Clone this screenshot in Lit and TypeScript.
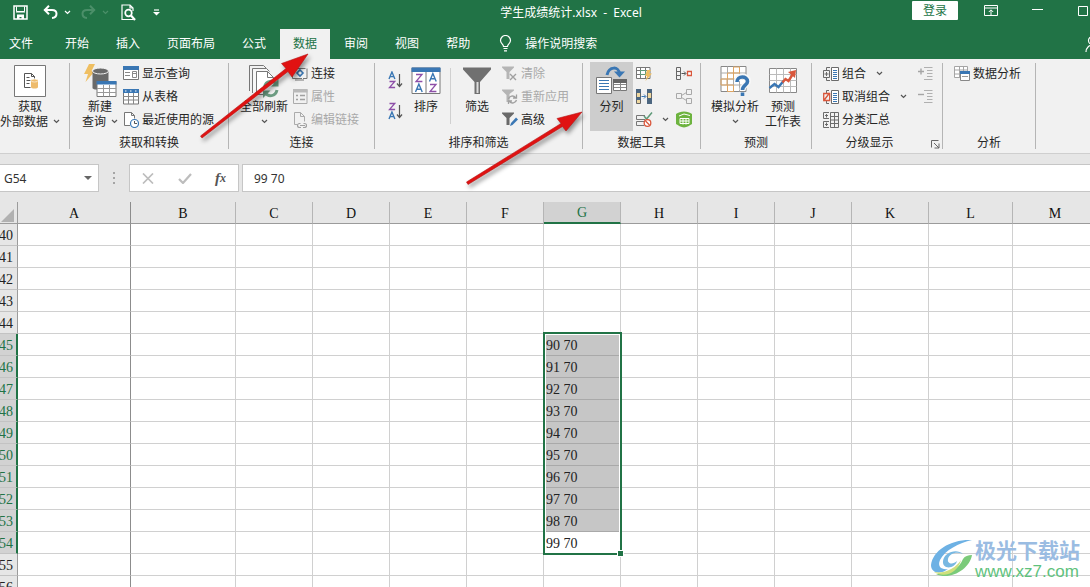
import { LitElement, html, svg, css, nothing } from "lit";
import { customElement, property } from "lit/decorators.js";
import { classMap } from "lit/directives/class-map.js";
import { styleMap } from "lit/directives/style-map.js";

type Icon = { w: number; h: number; body: unknown };

const draw = (icon: Icon) => html`<svg
  width=${icon.w}
  height=${icon.h}
  viewBox="0 0 ${icon.w} ${icon.h}"
  fill="none"
  aria-hidden="true"
>${icon.body}</svg>`;

const GREY = "#6b6b6b";
const BLUE = "#3a77b4";

const letterA = (x: number, y: number, s: number, c: string) =>
  svg`<path d="M${x} ${y + s}L${x + s * 0.42} ${y}L${x + s * 0.84} ${y + s}M${x + s * 0.17} ${y + s * 0.66}h${s * 0.5}" stroke=${c} stroke-width="1.4"/>`;
const letterZ = (x: number, y: number, s: number, c: string) =>
  svg`<path d="M${x} ${y + 0.5}h${s * 0.75}L${x} ${y + s - 0.5}h${s * 0.8}" stroke=${c} stroke-width="1.3"/>`;

const icons: Record<string, Icon> = {
  save: { w: 15, h: 15, body: svg`<path d="M1 1h13v13H1z" stroke="#fff" stroke-width="1.500"/><path d="M3.500 1.500v5h8v-5" stroke="#fff" stroke-width="1"/><path d="M3 7h9" stroke="#fff"/><path d="M4 9.500h7V14H8.500v-2h-2v2H4z" fill="#fff"/>` },
  undo: { w: 15, h: 14, body: svg`<path d="M1.500 5h7.500c6 0 6 7.500 0 8" stroke="#fff" stroke-width="2"/><path d="M6 .8L1.800 5 6 9.200" stroke="#fff" stroke-width="2"/>` },
  redo: { w: 15, h: 14, body: svg`<path d="M13.500 5H6C0 5 0 12.500 6 13" stroke="#4b8f69" stroke-width="2"/><path d="M9 .8L13.200 5 9 9.200" stroke="#4b8f69" stroke-width="2"/>` },
  preview: { w: 15, h: 17, body: svg`<path d="M12.500 15.500H1V1h8l3 3v3M9 1v3h3" stroke="#fff" stroke-width="1.200"/><circle cx="7.500" cy="9" r="3.300" stroke="#fff" stroke-width="1.700"/><path d="M10 11.500l4 4.500" stroke="#fff" stroke-width="2.200"/>` },
  more: { w: 7, h: 7, body: svg`<path d="M1 1h5" stroke="#fff" stroke-width="1.200"/><path d="M0 3h7L3.500 6.500z" fill="#fff"/>` },
  chevronLight: { w: 7, h: 5, body: svg`<path d="M1 1l2.500 2.500L6 1" stroke="#fff" stroke-width="1.200"/>` },
  chevronDim: { w: 7, h: 5, body: svg`<path d="M1 1l2.500 2.500L6 1" stroke="#4b8f69" stroke-width="1.200"/>` },
  chevron: { w: 7, h: 5, body: svg`<path d="M1 1l2.500 2.500L6 1" stroke="#555" stroke-width="1.200"/>` },
  ribbon: { w: 14, h: 11, body: svg`<path d="M.5.500h13v10H.5zM.5 3h13M7 10V5M4.800 7L7 4.800 9.200 7" stroke="#fff"/>` },
  minimize: { w: 11, h: 3, body: svg`<path d="M0 .5h11" stroke="#fff"/>` },
  maximize: { w: 10, h: 10, body: svg`<path d="M.5.500h9v9h-9z" stroke="#fff"/>` },
  person: { w: 14, h: 18, body: svg`<circle cx="7.500" cy="5.500" r="4" stroke="#fff" stroke-width="1.200"/><path d="M1 17c0-9 13-9 13 0" stroke="#fff" stroke-width="1.200"/>` },
  bulb: { w: 13, h: 17, body: svg`<path d="M4.500 11.500c0-2.500-3-3-3-6a5 5 0 0 1 10 0c0 3-3 3.500-3 6zM4.500 13.500h4M5 15.800h3" stroke="#fff" stroke-width="1.200"/>` },

  external: { w: 32, h: 32, body: svg`<path d="M.5.500h31v31H.5z" fill="#fff" stroke="#777"/><path d="M16.500 22.500h-6v-14h7l3 3v2M17.500 8.500v3h3M12.500 12.500h3M12.500 15.500h4M12.500 18.500h3" stroke="#555"/><path d="M17 15.500v6.500c0 2 7 2 7 0v-6.500z" fill="#eebb6c"/><ellipse cx="20.500" cy="15.500" rx="3.500" ry="1.500" fill="#eebb6c" stroke="#fff" stroke-width=".6"/>` },
  newQuery: { w: 34, h: 34, body: svg`<path d="M6 0h6L8.500 7H12L2.500 18 5 10H1z" fill="#efbf62"/><path d="M9.500 7v17c0 2.500 16 2.500 16 0V7z" fill="#6a6a6a"/><ellipse cx="17.500" cy="7" rx="8" ry="3" fill="#6a6a6a" stroke="#f1f1f1"/><path d="M14 17.500h19v15H14z" fill="#fff" stroke="#777"/><path d="M13.500 17h20v3.500h-20z" fill="${BLUE}"/><path d="M14 24.500h19M14 28.500h19M20.500 21v11.500M26.500 21v11.500" stroke="#999"/>` },
  refresh: { w: 34, h: 34, body: svg`<path d="M2.500 27V1.500h14l3 3" stroke="#777"/><path d="M5.500 29V4.500h14l3 3" fill="#f7f7f7" stroke="#777"/><path d="M9.500 30.500v-23h11l6 6v17z" fill="#fff" stroke="#777"/><path d="M20.500 7.500v6h6" stroke="#777"/><circle cx="24" cy="24.500" r="8.500" fill="#f1f1f1"/><path d="M17.500 23c1.500-7 9-7 11.500-3M30 26c-1.500 7-9 7-11.500 3" stroke="#6c9c82" stroke-width="3"/><path d="M31.500 15v7.500H24zM16 34v-7.500h7.500z" fill="#6c9c82"/>` },
  sort: { w: 30, h: 28, body: svg`<path d="M1 1h28v25.500H1zM15 1v26" fill="#fff" stroke="#777"/><path d="M.5.500h29V5H.5z" fill="${BLUE}"/>${letterZ(5, 7, 8, "#8d4fa8")}${letterA(4.500, 17, 8, BLUE)}${letterA(18.500, 6.500, 8, BLUE)}${letterZ(19, 17, 8, "#8d4fa8")}` },
  filter: { w: 30, h: 30, body: svg`<path d="M1 1.500h28v2L18 16v12h-5.500V16L1 3.500z" fill="#707070"/><path d="M15.500 16v11" stroke="#dedede" stroke-width="2"/>` },
  columns: { w: 32, h: 30, body: svg`<path d="M.5 11.500h15v16H.5zM17.500 14.500h13v10h-13z" fill="#fff" stroke="#777"/><path d="M3 14.500h10M3 17.500h10M3 20.500h10M3 23.500h10" stroke="${BLUE}"/><path d="M17 13h14v4H17z" fill="#666"/><path d="M24.500 17v8M18 18.500h12M18 21.500h12" stroke="#888"/><path d="M11 9c2-9 12-9 12.500-1" stroke="${BLUE}" stroke-width="3"/><path d="M18 5.500l5.500 6 5.500-6" fill="${BLUE}"/>` },
  whatIf: { w: 32, h: 32, body: svg`<path d="M2 1.500h25v25H2z" fill="#fff" stroke="#888"/><path d="M8.500 1.500v25M14.500 1.500v25M20.500 1.500v25M2 8h25M2 14h25M2 20h25" stroke="#aaa"/><path d="M8.500 8h6v6h-6zM2 14h6v6H2zM14.500 2h6v6h-6zM8.500 20h6v6.500h-6z" stroke="#dfa562"/><path d="M18 16c0-6 11-6 11 0 0 4-5.500 3.500-5.500 9" stroke="#f8f8f8" stroke-width="6"/><path d="M18 17c0-6.500 10.500-6.500 10.500-.5 0 4-5 3.500-5 8.500M23.500 27.500V31" stroke="${BLUE}" stroke-width="3.600"/>` },
  forecast: { w: 30, h: 28, body: svg`<path d="M1.500 1.500h27v24h-27z" fill="#fff" stroke="#888"/><path d="M8.500 1.500v24M15.500 1.500v24M22.500 1.500v24M1.500 7.500h27M1.500 13.500h27M1.500 19.500h27" stroke="#bbb"/><path d="M1.500 21l5-4 4 3 5-6" stroke="${BLUE}" stroke-width="2.400"/><path d="M14.500 15.500l3-3.500 3 2 5-8" stroke="#d9573c" stroke-width="2.400"/><path d="M20 5l8-2-1 8z" fill="#d9573c"/>` },

  showQuery: { w: 16, h: 15, body: svg`<path d="M.5.500h15v13H.5z" fill="#fff" stroke="#777"/><path d="M0 0h16v4H0z" fill="${BLUE}"/><path d="M2 6.500h5M2 9.500h5M9.500 5.500h4v6h-4zM10 7.500h3" stroke="#888"/>` },
  fromTable: { w: 16, h: 16, body: svg`<path d="M.5.500h15v14.500H.5z" fill="#fff" stroke="#777"/><path d="M0 0h16v4H0z" fill="${BLUE}"/><path d="M5.500 4v11M10.500 4v11M0 7.500h16M0 11h16" stroke="#888"/><path d="M2 2h1.500M7 2h1.500M12 2h1.500" stroke="#fff"/>` },
  recent: { w: 16, h: 16, body: svg`<path d="M7 13.500H1.500V.5h7l3 3v3M8.500.500v3h3" fill="#fff" stroke="#777"/><circle cx="11.500" cy="11.500" r="4" fill="#fff" stroke="${BLUE}" stroke-width="1.200"/><path d="M11.500 9v2.500h2.500" stroke="#555"/>` },
  connect: { w: 16, h: 15, body: svg`<path d="M10 12.500H.5v-10h13M3 14h9M15 2.500v10h-4" stroke="#777"/><path d="M8 4l3 3-3 3-3-3z" fill="#fff" stroke="${BLUE}" stroke-width="1.600"/>` },
  props: { w: 15, h: 15, body: svg`<path d="M.5.500h13.500v14H.5z" stroke="#ababab"/><path d="M0 0h14.500v3.500H0z" fill="#b9b9b9"/><path d="M3 6.500h2M3 10.500h2M7 6.500h5M7 10.500h5" stroke="#a0a0a0" stroke-width="1.500"/>` },
  editLinks: { w: 14, h: 16, body: svg`<path d="M4 12.500H1.500V.5h6l4 4v5M7.500.500v4h4" stroke="#ababab"/><path d="M7.500 11.500h-1a2 2 0 0 0 0 4h1.500M10.500 11.500h1a2 2 0 0 1 0 4h-1.500M7 13.500h5" stroke="#a0a0a0" stroke-width="1.200"/>` },
  sortAsc: { w: 15, h: 18, body: svg`${letterA(1, 1, 7, BLUE)}${letterZ(1.500, 10, 7, "#8d4fa8")}<path d="M11.500 3v12.500M9 12.500l2.500 3 2.500-3" stroke="#555" stroke-width="1.200"/>` },
  sortDesc: { w: 15, h: 18, body: svg`${letterZ(1.500, 1, 7, "#8d4fa8")}${letterA(1, 10, 7, BLUE)}<path d="M11.500 3v12.500M9 12.500l2.500 3 2.500-3" stroke="#555" stroke-width="1.200"/>` },
  clear: { w: 16, h: 15, body: svg`<path d="M0 .5h12v1L7.500 6v7h-3V6L0 1.500z" fill="#b5b5b5"/><path d="M8 8l6 6M14 8l-6 6" stroke="#a0a0a0" stroke-width="1.400"/>` },
  reapply: { w: 16, h: 15, body: svg`<path d="M0 .5h12v1L7.500 5v8h-3V6L0 1.500z" fill="#b5b5b5"/><path d="M6.500 10a4 4 0 0 1 7-1.500M14.500 5.500v3.500H11M14.500 11a4 4 0 0 1-7 1.500M6.500 15v-3H10" stroke="#a0a0a0" stroke-width="1.300"/>` },
  advanced: { w: 16, h: 15, body: svg`<path d="M0 .5h12v1L7.500 6v7h-3V6L0 1.500z" fill="#696969"/><path d="M8 14l1-3 5-5.500 2 2-5.500 5.500z" fill="${BLUE}"/>` },
  flash: { w: 16, h: 15, body: svg`<path d="M.5 1.500h13.500v11H.5zM.5 4.500h13M.5 8.500h13M4.500 2v10M9.500 2v10" fill="#fff" stroke="#777"/><path d="M4.500 4.500h5v4h-5z" fill="#fff" stroke="#5f9a79"/><path d="M11 4h4l-2 3.500h3L9.500 15l1.500-5H9z" fill="#efbf62"/>` },
  dedupe: { w: 16, h: 15, body: svg`<path d="M.5.500h4v14h-4zM11.500.500h4v14h-4z" fill="#efd8a0" stroke="#666"/><path d="M0 0h5v4H0zM0 8h5v3H0zM11 0h5v4h-5zM11 9h5v6h-5z" fill="#4c6680"/><path d="M5.500 7.500h4M8 5.500l2 2-2 2" stroke="${BLUE}"/>` },
  validate: { w: 17, h: 15, body: svg`<path d="M9 3.500H.5v4H9M8 9.500H.5v4H8" stroke="#777"/><path d="M8 4l2.500 3L16 .5" stroke="#5f9a79" stroke-width="1.500"/><circle cx="11.500" cy="11" r="3.300" fill="#fff" stroke="#d9573c" stroke-width="1.300"/><path d="M9.500 9l4 4" stroke="#d9573c" stroke-width="1.300"/>` },
  consolidate: { w: 16, h: 13, body: svg`<path d="M.5.500h4v12h-4zM.5 4.500h4M.5 8.500h4" stroke="#666"/><path d="M5.500 6.500h4M8 4.500l2 2-2 2" stroke="#555"/><path d="M11.500 4.500h4v4h-4z" fill="#fff" stroke="#d9573c" stroke-width="1.300"/>` },
  relations: { w: 16, h: 15, body: svg`<path d="M.5 4.500h5v5h-5zM10.500.500h5v5h-5zM10.500 9.500h5v5h-5zM5.500 6.500l5-3M5.500 8.500l5 3" stroke="#a8a8a8"/>` },
  model: { w: 16, h: 17, body: svg`<path d="M8 .5c3 0 6 1 8 2.500v10c-2 1.500-5 3-8 3.500-3-.5-6-2-8-3.500V3C2 1.500 5 .5 8 .5z" fill="#6db33f"/><path d="M3 5l5-2 6 1.500M4 7.500h9v5H4zM4 10h9M7 7.500v6M10 7.500v6" stroke="#fff"/>` },
  group: { w: 16, h: 14, body: svg`<path d="M3.500 3V.5H7M3.500 11v2.500H7M.5 3.500h6v7h-6zM3.500 5v4M1.500 7h4" stroke="${GREY}"/><path d="M8.500.500h7v13h-7z" fill="#fff" stroke="${GREY}"/><path d="M10 3.500h4M10 5.500h4M10 7.500h4M10 9.500h4M10 11.500h4" stroke="${BLUE}"/>` },
  ungroup: { w: 16, h: 14, body: svg`<path d="M3.500 3V.5H6M3.500 11v2.500H6" stroke="${GREY}"/><path d="M.7 3.500h6v7h-6zM6.500 3L.5 11" stroke="#d9573c" stroke-width="1.300"/><path d="M8.500.500h7v13h-7z" fill="#fff" stroke="${GREY}"/><path d="M10 3.500h4M10 5.500h4M10 7.500h4M10 9.500h4M10 11.500h4" stroke="${BLUE}"/>` },
  subtotal: { w: 16, h: 16, body: svg`<path d="M6 .5H.5v6H6M6 9.500H.5v6H6M3.500 2v3.500M2 3.500h3M3.500 10.500V14M2 12.500h3M7.500.500h8v15h-8zM11.500.500v15M7.500 4.500h8M7.500 8h8M7.500 11.500h8" stroke="${GREY}"/>` },
  detailPlus: { w: 15, h: 13, body: svg`<path d="M0 4.500h6M3 1.500v6" stroke="#a5a5a5" stroke-width="1.400"/><path d="M6 .5h8.500M9 3.500h5.500M9 6.500h5.500M9 9.500h5.500M6 12.500h8.500" stroke="#b0b0b0"/>` },
  detailMinus: { w: 15, h: 13, body: svg`<path d="M0 4.500h6" stroke="#a5a5a5" stroke-width="1.400"/><path d="M6 .5h8.500M9 3.500h5.500M9 6.500h5.500M9 9.500h5.500M6 12.500h8.500" stroke="#b0b0b0"/>` },
  launcher: { w: 9, h: 9, body: svg`<path d="M.5 7.500v-7h7M3 3l5 5M8 3.500v4.500H3.500" stroke="#666"/>` },
  analysis: { w: 16, h: 15, body: svg`<path d="M.5.500h13v11H.5zM5.500.500v11M9.500.500v11M.5 4h13M.5 8h13" fill="#fff" stroke="#a5a5a5"/><path d="M6.500 5.500h9v9h-9z" fill="#fff" stroke="#888"/><path d="M6 5h10v3H6z" fill="${BLUE}"/><path d="M8 10.500h6" stroke="#999"/>` },

  triangle: { w: 8, h: 4, body: svg`<path d="M0 0h8L4 4z" fill="#666"/>` },
  cancel: { w: 12, h: 11, body: svg`<path d="M1 .5l10 10M11 .5l-10 10" stroke="#bdbdbd" stroke-width="1.700"/>` },
  accept: { w: 14, h: 11, body: svg`<path d="M1 6l4 4 8-9" stroke="#bdbdbd" stroke-width="2.200"/>` },
};

@customElement("ribbon-button")
class RibbonButton extends LitElement {
  @property() icon = "";
  @property() lines = "";
  @property() label = "";
  @property({ type: Boolean }) large = false;
  @property({ type: Boolean }) menu = false;
  @property({ type: Boolean }) active = false;
  @property({ type: Boolean }) disabled = false;

  static styles = css`
    :host { display: block; }
    button {
      display: flex; align-items: center; border: 0; margin: 0; padding: 0;
      background: none; color: #262626; white-space: nowrap;
      font: 12px/15px "Noto Sans", "Noto Sans CJK SC", sans-serif;
    }
    .small { height: 23px; gap: 3px; }
    .small .pic { width: 16px; }
    .small .menu { margin-left: 7px; }
    .large { flex-direction: column; width: 100%; height: 69px; }
    .large .pic { height: 37px; }
    .active { background: #cdcdcd; }
    button:disabled { color: #a9a9a9; }
    .pic { display: flex; align-items: center; justify-content: center; }
    .line { display: flex; align-items: center; justify-content: center; gap: 5px; height: 15px; }
    svg { display: block; flex: none; }
  `;

  render() {
    const parts = this.lines.split("|");
    const cls = classMap({ large: this.large, small: !this.large, active: this.active });
    if (!this.large) {
      return html`<button class=${cls} ?disabled=${this.disabled} aria-label=${this.label || this.lines}>
        <span class="pic">${draw(icons[this.icon])}</span>
        ${this.lines ? html`<span>${this.lines}</span>` : nothing}
        ${this.menu ? html`<span class="menu">${draw(icons.chevron)}</span>` : nothing}
      </button>`;
    }
    const rows = this.menu && parts.length === 1 ? [...parts, ""] : parts;
    return html`<button class=${cls} ?disabled=${this.disabled}>
      <span class="pic">${draw(icons[this.icon])}</span>
      ${rows.map((text, i) => html`<span class="line">${text}${this.menu && i === rows.length - 1 ? draw(icons.chevron) : nothing}</span>`)}
    </button>`;
  }
}

const columns: [string, number][] = [
  ["A", 113], ["B", 105], ["C", 77], ["D", 77], ["E", 77], ["F", 77], ["G", 77],
  ["H", 77], ["I", 77], ["J", 77], ["K", 77], ["L", 84], ["M", 85],
];
const rowNumbers = Array.from({ length: 17 }, (_, i) => 40 + i);
const FIRST = 45;
const LAST = 54;

@customElement("sheet-grid")
class SheetGrid extends LitElement {
  static styles = css`
    :host { display: block; overflow: hidden; background: #fff; }
    /* The row-number column is partly scrolled off the left edge. */
    table {
      table-layout: fixed; border-collapse: separate; border-spacing: 0;
      width: max-content; margin-left: -12px;
      font: 14px/19px "Liberation Serif", serif; color: #222;
    }
    .numbers { width: 30px; }
    th, td { box-sizing: border-box; height: 22px; padding: 2px 0 0; font-weight: 400; white-space: nowrap; }
    th { background: #e6e6e6; }
    thead th { border-right: 1px solid #b5b5b5; border-bottom: 1px solid #9b9b9b; color: #111; }
    thead .picked { background: #d2d2d2; color: #217346; border-bottom: 2px solid #217346; padding-top: 1px; }
    thead .corner { padding-top: 0; border-right-color: #9b9b9b; }
    tbody th {
      text-align: right; padding-right: 4px;
      border-right: 1px solid #9b9b9b; border-bottom: 1px solid #c3c3c3;
    }
    tbody .picked { background: #d2d2d2; color: #217346; border-right: 2px solid #217346; padding-right: 3px; }
    td { border-right: 1px solid #d0d0d0; border-bottom: 1px solid #d0d0d0; text-align: left; padding-left: 2px; }
    td.edge, th.edge { border-right-color: #8c8c8c; }
    td.filled { background: #c6c6c6; border-bottom-color: #a9a9a9; }
    td.anchor { position: relative; }
    .corner svg { display: block; margin: 5px 3px 0 auto; }
    .selection {
      position: absolute; top: -2px; left: -1px; right: -2px;
      border: 2px solid #217346; box-sizing: border-box;
      box-shadow: inset 0 0 0 1px #fff; pointer-events: none;
    }
    .handle {
      position: absolute; right: -4px; bottom: -4px; width: 5px; height: 5px;
      background: #217346; border: 1px solid #fff;
    }
  `;

  private cell(row: number, col: string) {
    const inside = col === "G" && row >= FIRST && row <= LAST;
    const anchor = col === "G" && row === FIRST;
    return html`<td class=${classMap({ edge: col === "A", filled: inside && row !== LAST, anchor })}>${inside ? `${row + 45} 70` : nothing}${anchor
      ? html`<div class="selection" style=${styleMap({ height: `${(LAST - FIRST + 1) * 22 + 3}px` })}><span class="handle"></span></div>`
      : nothing}</td>`;
  }

  render() {
    return html`<table>
      <colgroup>
        <col class="numbers" />
        ${columns.map(([, w]) => html`<col style=${styleMap({ width: `${w}px` })} />`)}
      </colgroup>
      <thead>
        <tr>
          <th class="corner" aria-label="全选"><svg width="13" height="13" viewBox="0 0 13 13" aria-hidden="true"><path d="M13 0v13H0z" fill="#b1b1b1" /></svg></th>
          ${columns.map(([name]) => html`<th scope="col" class=${classMap({ picked: name === "G", edge: name === "A" })}>${name}</th>`)}
        </tr>
      </thead>
      <tbody>
        ${rowNumbers.map((n) => html`<tr>
          <th scope="row" class=${classMap({ picked: n >= FIRST && n <= LAST })}>${n}</th>
          ${columns.map(([name]) => this.cell(n, name))}
        </tr>`)}
      </tbody>
    </table>`;
  }
}

@customElement("app-root")
class AppRoot extends LitElement {
  static styles = css`
    :host {
      display: flex; flex-direction: column; position: relative; height: 100vh; overflow: hidden;
      background: #e6e6e6; color: #262626;
      font: 12px/15px "Noto Sans", "Noto Sans CJK SC", sans-serif;
    }
    svg { display: block; flex: none; }
    button { border: 0; margin: 0; padding: 0; background: none; color: inherit; font: inherit; white-space: nowrap; display: flex; align-items: center; justify-content: center; }
    input { font: inherit; color: inherit; border: 0; margin: 0; padding: 0; background: none; outline: 0; min-width: 0; }

    .title { display: flex; align-items: center; height: 24px; padding-bottom: 5px; background: #217346; color: #fff; }
    .quick { display: flex; align-items: center; box-sizing: border-box; width: 230px; padding-left: 13px; }
    .quick .undo { margin-left: 15px; }
    .quick .arrow { margin-left: 6px; }
    .quick .redo { margin-left: 10px; }
    .quick .preview { margin-left: 12px; }
    .quick .more { margin-left: 17px; }
    .name { flex: 1; text-align: center; white-space: pre; }
    .window { display: flex; align-items: center; box-sizing: border-box; width: 178px; overflow: hidden; height: 24px; padding-bottom: 3px; }
    .login { width: 46px; height: 19px; background: #fff; color: #217346; border-radius: 1px; margin-right: 26px; }
    .minimize { margin: 0 35px 0 34px; }

    .tabs { display: flex; align-items: stretch; gap: 1px; height: 30px; background: #217346; color: #fff; overflow: hidden; }
    .tab { padding: 0 13px 2px; }
    .tab.file { padding-left: 9px; padding-right: 18px; }
    .tab.current { background: #f1f1f1; color: #217346; }
    .tell { gap: 13px; padding: 0 0 2px 15px; }
    .share { margin-left: auto; margin-right: -9px; }

    .ribbon { display: flex; height: 94px; background: #f1f1f1; border-bottom: 1px solid #cfcfcf; overflow: hidden; }
    .group { display: flex; flex-direction: column; box-sizing: border-box; padding-top: 3px; position: relative; flex: none;
      background: linear-gradient(#b5b5b5, #b5b5b5) right 4px / 1px 86px no-repeat; }
    .body { display: flex; height: 69px; }
    .caption { text-align: center; line-height: 24px; height: 22px; padding-right: 1px; }
    .stack { display: flex; flex-direction: column; }
    .external { width: 70px; }
    .external .large { width: 60px; }
    .query { width: 159px; }
    .query .body { padding-left: 7px; }
    .links { width: 146px; }
    .links .body { padding-left: 11px; gap: 4px; }
    .sorting { width: 208px; }
    .sorting .body { padding-left: 12px; }
    .sorting .order { justify-content: center; gap: 8px; padding-bottom: 2px; }
    .rule { width: 1px; background: #d0d0d0; margin: 6px 1px 7px; }
    .tools { width: 118px; }
    .tools .body { padding-left: 7px; }
    .forecast { width: 111px; }
    .forecast .body { padding-left: 9px; gap: 3px; }
    .outline { width: 131px; }
    .outline .caption { padding-right: 16px; }
    .outline .body { padding-left: 11px; }
    .outline .details { margin-left: auto; padding-right: 10px; }
    .launcher { position: absolute; right: 3px; bottom: 4px; }
    .analyze { width: 93px; }
    .analyze .body { padding-left: 11px; }
    .w40 { width: 40px; } .w43 { width: 43px; } .w46 { width: 46px; } .w50 { width: 50px; }
    .spaced { margin-left: 3px; }

    .formula { display: flex; align-items: stretch; padding: 10px 0; height: 28px; color: #333; }
    .box { display: flex; align-items: center; box-sizing: border-box; background: #fff; border: 1px solid #c6c6c6; }
    .ref { width: 99px; border-left: 0; padding: 0 6px 0 4px; }
    .ref input { flex: 1; }
    .dots { width: 30px; display: flex; align-items: center; justify-content: center; }
    .actions { width: 110px; padding: 0 12px; justify-content: space-between; margin-right: 3px; }
    .fx { font: italic bold 15px/15px "Liberation Serif", serif; color: #555; }
    .fx small { font-size: 12px; }
    .value { flex: 1; border-right: 0; padding-left: 11px; }
    .value input { flex: 1; }
    sheet-grid { flex: 1; min-height: 0; }

    .overlay { position: absolute; top: 0; left: 0; pointer-events: none; filter: drop-shadow(2px 3px 2px rgba(0, 0, 0, 0.4)); }
    .mark { position: absolute; right: 10px; bottom: 6px; display: flex; align-items: center; gap: 2px; pointer-events: none; }
    .mark .site { font: 700 21px/28px "Noto Sans CJK SC", sans-serif; color: #9abce2; white-space: nowrap; }
    .mark .url { font: 17px/18px "Liberation Sans", sans-serif; color: #5fc27d; }
  `;

  private tabs = ["文件", "开始", "插入", "页面布局", "公式", "数据", "审阅", "视图", "帮助"];

  render() {
    return html`
      <header class="title">
        <div class="quick">
          <button aria-label="保存">${draw(icons.save)}</button>
          <button class="undo" aria-label="撤消">${draw(icons.undo)}</button>
          <button class="arrow" aria-label="撤消列表">${draw(icons.chevronLight)}</button>
          <button class="redo" aria-label="恢复">${draw(icons.redo)}</button>
          <button class="arrow" aria-label="恢复列表">${draw(icons.chevronDim)}</button>
          <button class="preview" aria-label="打印预览">${draw(icons.preview)}</button>
          <button class="more" aria-label="自定义快速访问工具栏">${draw(icons.more)}</button>
        </div>
        <div class="name">学生成绩统计.xlsx  -  Excel</div>
        <div class="window">
          <button class="login">登录</button>
          <button aria-label="功能区显示选项">${draw(icons.ribbon)}</button>
          <button class="minimize" aria-label="最小化">${draw(icons.minimize)}</button>
          <button aria-label="最大化">${draw(icons.maximize)}</button>
        </div>
      </header>
      <nav class="tabs">
        ${this.tabs.map((t) => html`<button class=${classMap({ tab: true, file: t === "文件", current: t === "数据" })}>${t}</button>`)}
        <button class="tell">${draw(icons.bulb)}操作说明搜索</button>
        <button class="share" aria-label="共享">${draw(icons.person)}</button>
      </nav>
      <section class="ribbon">
        <div class="group external">
          <div class="body"><ribbon-button class="large" large menu icon="external" lines="获取|外部数据"></ribbon-button></div>
        </div>
        <div class="group query">
          <div class="body">
            <ribbon-button class="w46" large menu icon="newQuery" lines="新建|查询"></ribbon-button>
            <div class="stack">
              <ribbon-button icon="showQuery" lines="显示查询"></ribbon-button>
              <ribbon-button icon="fromTable" lines="从表格"></ribbon-button>
              <ribbon-button icon="recent" lines="最近使用的源"></ribbon-button>
            </div>
          </div>
          <div class="caption">获取和转换</div>
        </div>
        <div class="group links">
          <div class="body">
            <ribbon-button large menu icon="refresh" lines="全部刷新"></ribbon-button>
            <div class="stack">
              <ribbon-button icon="connect" lines="连接"></ribbon-button>
              <ribbon-button disabled icon="props" lines="属性"></ribbon-button>
              <ribbon-button disabled icon="editLinks" lines="编辑链接"></ribbon-button>
            </div>
          </div>
          <div class="caption">连接</div>
        </div>
        <div class="group sorting">
          <div class="body">
            <div class="stack order">
              <ribbon-button icon="sortAsc" label="升序"></ribbon-button>
              <ribbon-button icon="sortDesc" label="降序"></ribbon-button>
            </div>
            <ribbon-button class="w46" large icon="sort" lines="排序"></ribbon-button>
            <div class="rule"></div>
            <ribbon-button class="w50" large icon="filter" lines="筛选"></ribbon-button>
            <div class="stack">
              <ribbon-button disabled icon="clear" lines="清除"></ribbon-button>
              <ribbon-button disabled icon="reapply" lines="重新应用"></ribbon-button>
              <ribbon-button icon="advanced" lines="高级"></ribbon-button>
            </div>
          </div>
          <div class="caption">排序和筛选</div>
        </div>
        <div class="group tools">
          <div class="body">
            <ribbon-button class="w43" large active icon="columns" lines="分列"></ribbon-button>
            <div class="stack w40 spaced">
              <ribbon-button icon="flash" label="快速填充"></ribbon-button>
              <ribbon-button icon="dedupe" label="删除重复值"></ribbon-button>
              <ribbon-button menu icon="validate" label="数据验证"></ribbon-button>
            </div>
            <div class="stack">
              <ribbon-button icon="consolidate" label="合并计算"></ribbon-button>
              <ribbon-button icon="relations" label="关系"></ribbon-button>
              <ribbon-button icon="model" label="管理数据模型"></ribbon-button>
            </div>
          </div>
          <div class="caption">数据工具</div>
        </div>
        <div class="group forecast">
          <div class="body">
            <ribbon-button class="w50" large menu icon="whatIf" lines="模拟分析"></ribbon-button>
            <ribbon-button class="w40" large icon="forecast" lines="预测|工作表"></ribbon-button>
          </div>
          <div class="caption">预测</div>
        </div>
        <div class="group outline">
          <div class="body">
            <div class="stack">
              <ribbon-button menu icon="group" lines="组合"></ribbon-button>
              <ribbon-button menu icon="ungroup" lines="取消组合"></ribbon-button>
              <ribbon-button icon="subtotal" lines="分类汇总"></ribbon-button>
            </div>
            <div class="stack details">
              <ribbon-button disabled icon="detailPlus" label="显示明细数据"></ribbon-button>
              <ribbon-button disabled icon="detailMinus" label="隐藏明细数据"></ribbon-button>
            </div>
          </div>
          <div class="caption">分级显示</div>
          <button class="launcher" aria-label="分级显示设置">${draw(icons.launcher)}</button>
        </div>
        <div class="group analyze">
          <div class="body"><ribbon-button icon="analysis" lines="数据分析"></ribbon-button></div>
          <div class="caption">分析</div>
        </div>
      </section>
      <div class="formula">
        <div class="box ref">
          <input aria-label="名称框" value="G54" />
          <button aria-label="名称列表">${draw(icons.triangle)}</button>
        </div>
        <div class="dots"><svg width="2" height="12" viewBox="0 0 2 12" aria-hidden="true"><path d="M0 0h2v2H0zM0 5h2v2H0zM0 10h2v2H0z" fill="#a5a5a5" /></svg></div>
        <div class="box actions">
          <button aria-label="取消">${draw(icons.cancel)}</button>
          <button aria-label="输入">${draw(icons.accept)}</button>
          <button class="fx" aria-label="插入函数">f<small>x</small></button>
        </div>
        <div class="box value"><input aria-label="编辑栏" value="99 70" /></div>
      </div>
      <sheet-grid></sheet-grid>

      <svg class="overlay" width="600" height="200" viewBox="0 0 600 200" aria-hidden="true">
        <path d="M200.500 136L286 68.500 281.500 63.500 308 54 292 77 288 71.500 202 138z" fill="#e01212" stroke="#b51212" stroke-width=".6" />
        <path d="M466.500 182L561 123.500 557 118.500 582 112 566 131 562.500 126.500 468 184.500z" fill="#e01212" stroke="#b51212" stroke-width=".6" />
      </svg>
      <div class="mark">
        <svg width="42" height="40" viewBox="0 0 42 40" aria-hidden="true">
          <path d="M0 27C2 12 20 1 41 2 28 5 14 12 9 22c-3 7 2 10 8 9C9 37 0 35 0 27z" fill="#6db1e4" />
          <path d="M12 23c1-9 14-13 20-7-7-3-14 0-15 5s5 6 9 2c-2 8-15 9-14 0z" fill="#78b8e2" />
          <path d="M5 36c13 1 23-5 27-15 2-3 5-4 9-4-2 14-22 26-36 19z" fill="#7bcb7a" />
          <path d="M3 34c11 2 22-4 27-12-3 12-16 19-27 12z" fill="#cfe07c" />
        </svg>
        <div>
          <div class="site">极光下载站</div>
          <div class="url">www.xz7.com</div>
        </div>
      </div>
    `;
  }
}
